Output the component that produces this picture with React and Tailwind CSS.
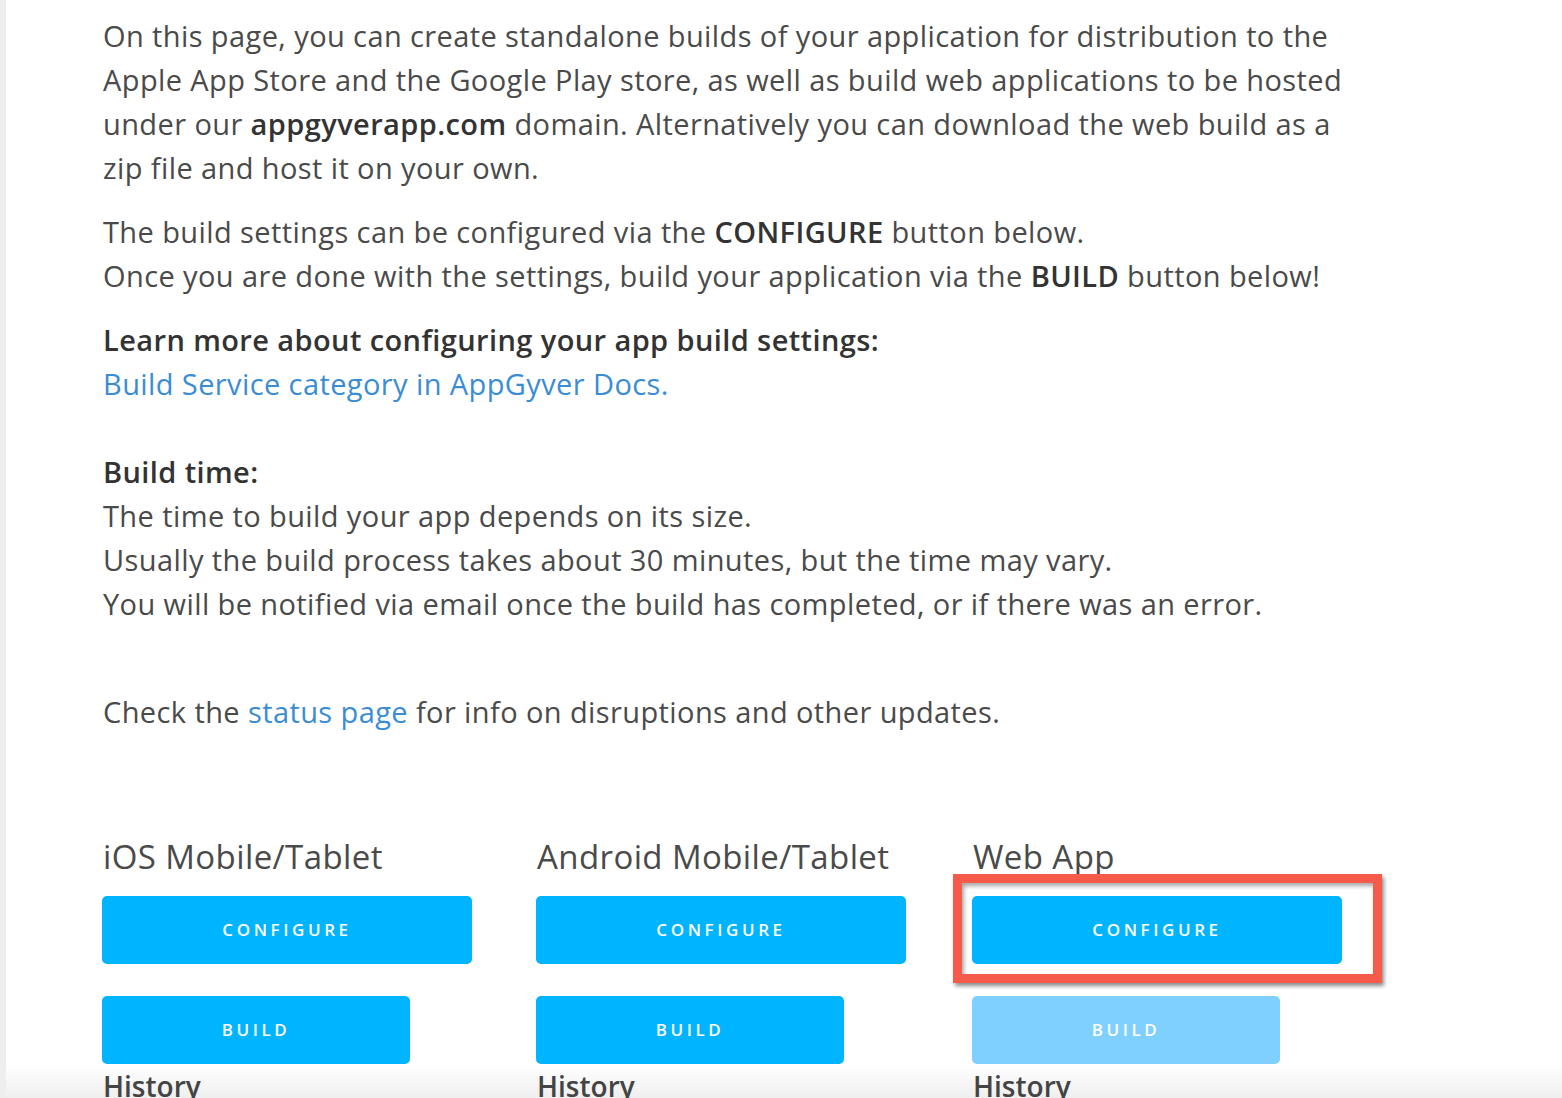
import React from 'react';

const FONT = { fontFamily: '"Open Sans", Lato, sans-serif' };

const PLATFORMS = [
  { title: 'iOS Mobile/Tablet', highlight: false, buildDisabled: false },
  { title: 'Android Mobile/Tablet', highlight: false, buildDisabled: false },
  { title: 'Web App', highlight: true, buildDisabled: true },
];

function PlatformColumn({ title, highlight, buildDisabled }) {
  const configure = (
    <button className="w-[370px] h-[68px] rounded-[5px] bg-[#00b4ff] text-white text-[17px] font-semibold tracking-[3.6px]">
      CONFIGURE
    </button>
  );

  return (
    <div className="flex flex-col">
      <h3 className="text-[33px] leading-[44px] tracking-[0.4px] text-[#4a4a4a] pl-px">{title}</h3>
      <div className="mt-[17px] h-[68px]">
        {highlight ? (
          <div className="relative">
            {configure}
            <div className="absolute -left-[19px] -top-[22px] w-[429px] h-[109px] border-[9px] border-[#f55a4a] shadow-[2px_3px_4px_rgba(0,0,0,0.45),inset_2px_3px_4px_rgba(0,0,0,0.35)] pointer-events-none" />
          </div>
        ) : configure}
      </div>
      <button
        className={
          'mt-[32px] w-[308px] h-[68px] rounded-[5px] text-white text-[17px] font-semibold tracking-[3.6px] ' +
          (buildDisabled ? 'bg-[#7fd0ff]' : 'bg-[#00b4ff]')
        }
      >
        BUILD
      </button>
      <div className="text-[28px] leading-[44px] font-semibold text-[#444] pl-px">History</div>
    </div>
  );
}

export default function App() {
  return (
    <div className="relative h-[1098px] overflow-hidden bg-white border-l-[6px] border-[#eeeeee]" style={FONT}>
      <div className="absolute left-0 right-0 bottom-0 h-[34px] bg-gradient-to-b from-white to-[#efefef]" />
      <div className="relative pl-[97px] pt-[14px] text-[29px] leading-[44px] tracking-[0.4px] text-[#4a4a4a] whitespace-nowrap">
        <p className="mb-[20px]">
          On this page, you can create standalone builds of your application for distribution to the<br />
          Apple App Store and the Google Play store, as well as build web applications to be hosted<br />
          under our <b className="font-semibold text-[#333]">appgyverapp.com</b> domain. Alternatively you can download the web build as a<br />
          zip file and host it on your own.
        </p>
        <p className="mb-[20px]">
          The build settings can be configured via the <b className="font-semibold text-[#333]">CONFIGURE</b> button below.<br />
          Once you are done with the settings, build your application via the <b className="font-semibold text-[#333]">BUILD</b> button below!
        </p>
        <p className="mb-[20px]">
          <b className="font-semibold text-[#333]">Learn more about configuring your app build settings:</b><br />
          <a className="text-[#3b8dd3]">Build Service category in AppGyver Docs.</a><br />
          <br />
          <b className="font-semibold text-[#333]">Build time:</b><br />
          The time to build your app depends on its size.<br />
          Usually the build process takes about 30 minutes, but the time may vary.<br />
          You will be notified via email once the build has completed, or if there was an error.<br />
          <br />
        </p>
        <p>
          Check the <a className="text-[#3b8dd3]">status page</a> for info on disruptions and other updates.
        </p>

        <div className="mt-[101px] grid grid-cols-[434px_436px_436px] -ml-px tracking-normal">
          {PLATFORMS.map(p => (
            <PlatformColumn key={p.title} {...p} />
          ))}
        </div>
      </div>
    </div>
  );
}
